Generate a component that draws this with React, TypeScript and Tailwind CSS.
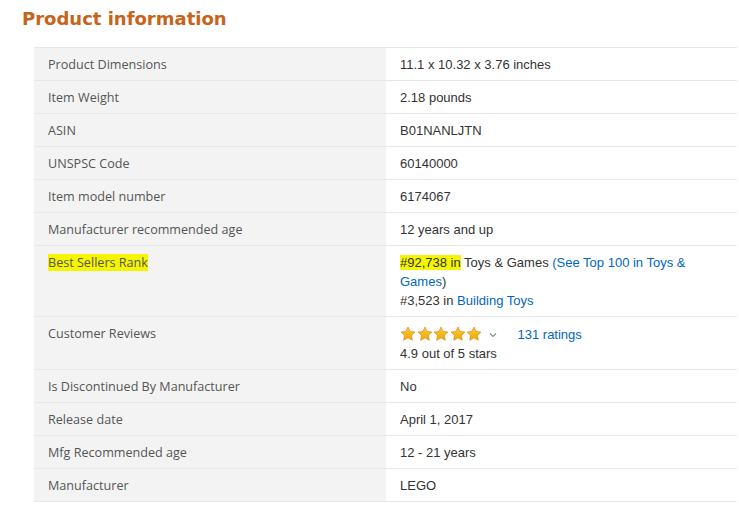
import React from "react";

const label = "font-['Open_Sans',sans-serif] text-[12.6px] text-[#555]";
const value = "font-['Liberation_Sans',Arial,sans-serif] text-[13px] text-[#333]";
const link = "text-[#0066c0]";

function Star() {
  return (
    <svg width="16" height="16" viewBox="0 0 24 24" className="mr-[0.5px]">
      <defs>
        <linearGradient id="sg" x1="0" y1="0" x2="0" y2="1">
          <stop offset="0" stopColor="#ffce3a" />
          <stop offset="1" stopColor="#f0a30a" />
        </linearGradient>
      </defs>
      <path
        d="M12 1.5l3.2 6.7 7.3.9-5.4 5 1.4 7.3L12 17.8l-6.5 3.6 1.4-7.3-5.4-5 7.3-.9z"
        fill="url(#sg)"
        stroke="#d8890b"
        strokeWidth="1"
        strokeLinejoin="round"
      />
    </svg>
  );
}

type Row = { name: React.ReactNode; val: React.ReactNode };

const rows: Row[] = [
  { name: "Product Dimensions", val: "11.1 x 10.32 x 3.76 inches" },
  { name: "Item Weight", val: "2.18 pounds" },
  { name: "ASIN", val: "B01NANLJTN" },
  { name: "UNSPSC Code", val: "60140000" },
  { name: "Item model number", val: "6174067" },
  { name: "Manufacturer recommended age", val: "12 years and up" },
  {
    name: <span className="bg-[#f5f500]">Best Sellers Rank</span>,
    val: (
      <>
        <div>
          <span className="bg-[#f5f500]">#92,738 in</span> Toys &amp; Games{" "}
          <span className={link}>(See Top 100 in Toys &amp; Games</span>)
        </div>
        <div>
          #3,523 in <span className={link}>Building Toys</span>
        </div>
      </>
    ),
  },
  {
    name: "Customer Reviews",
    val: (
      <>
        <div className="flex items-center h-[20px]">
          <Star />
          <Star />
          <Star />
          <Star />
          <Star />
          <svg width="10" height="10" viewBox="0 0 10 10" className="ml-[5px] mt-[1px]">
            <path d="M2 3.5l3 3 3-3" fill="none" stroke="#888" strokeWidth="1.1" />
          </svg>
          <span className={`${link} ml-[20px]`}>131 ratings</span>
        </div>
        <div>4.9 out of 5 stars</div>
      </>
    ),
  },
  { name: "Is Discontinued By Manufacturer", val: "No" },
  { name: "Release date", val: "April 1, 2017" },
  { name: "Mfg Recommended age", val: "12 - 21 years" },
  { name: "Manufacturer", val: "LEGO" },
];

export default function App() {
  return (
    <div className="w-[739px] h-[519px] bg-white overflow-hidden">
      <h2 className="pl-[22px] pt-[6px] font-['DejaVu_Sans',Verdana,sans-serif] font-bold text-[18px] leading-[25px] text-[#c7631b]">
        Product information
      </h2>
      <div className="ml-[34px] mt-[16px] w-[703px] border-t border-[#e7e7e7]">
        {rows.map((r, i) => (
          <div key={i} className="flex border-b border-[#e7e7e7] leading-[19px]">
            <div className={`w-[352px] shrink-0 bg-[#f3f3f3] pl-[14px] pr-3 pt-[7px] pb-[6px] ${label}`}>
              {r.name}
            </div>
            <div className={`flex-1 pl-[14px] pr-[36px] pt-[7px] pb-[6px] ${value}`}>{r.val}</div>
          </div>
        ))}
      </div>
    </div>
  );
}
